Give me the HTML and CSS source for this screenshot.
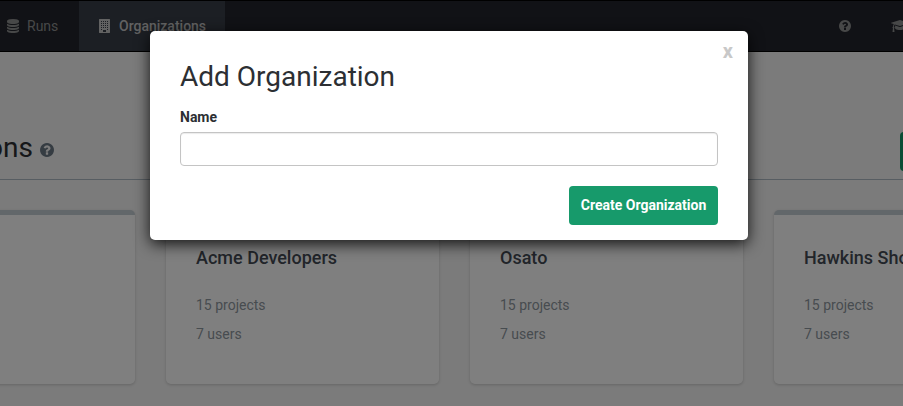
FILE: index.html
```html
<!DOCTYPE html>
<html lang="en">
<head>
<meta charset="utf-8">
<title>Organizations</title>
<link rel="stylesheet" href="styles.css">
</head>
<body>
<svg class="defs" aria-hidden="true">
  <symbol id="question" viewBox="128 128 1536 1536"><path d="M1024 1376v-192q0-14-9-23t-23-9h-192q-14 0-23 9t-9 23v192q0 14 9 23t23 9h192q14 0 23-9t9-23zm256-672q0-88-55.500-163t-138.500-116-170-41q-243 0-371 213-15 24 8 42l132 100q7 6 19 6 16 0 25-12 53-68 86-92 34-24 86-24 48 0 85.500 26t37.500 59q0 38-20 61t-68 45q-63 28-115.500 86.500t-52.500 125.500v36q0 14 9 23t23 9h192q14 0 23-9t9-23q0-19 21.500-49.500t54.500-49.500q32-18 49-28.500t46-35 44.500-48 28-60.500 12.500-81zm384 192q0 209-103 385.500t-279.500 279.500-385.500 103-385.500-103-279.500-279.500-103-385.500 103-385.500 279.500-279.500 385.500-103 385.500 103 279.500 279.500 103 385.500z"/></symbol>
</svg>
<header class="nav">
  <a class="tab tab-runs">
    <svg class="i-db" viewBox="128 0 1536 1792"><path d="M896 768q237 0 443-43t325-127v170q0 69-103 128t-280 93.500-385 34.500-385-34.500-280-93.500-103-128v-170q119 84 325 127t443 43zm0 768q237 0 443-43t325-127v170q0 69-103 128t-280 93.500-385 34.500-385-34.500-280-93.500-103-128v-170q119 84 325 127t443 43zm0-384q237 0 443-43t325-127v170q0 69-103 128t-280 93.500-385 34.500-385-34.500-280-93.500-103-128v-170q119 84 325 127t443 43zm0-1152q208 0 385 34.500t280 93.500 103 128v128q0 69-103 128t-280 93.500-385 34.500-385-34.500-280-93.500-103-128v-128q0-69 103-128t280-93.500 385-34.500z"/></svg>
    <span>Runs</span>
  </a>
  <a class="tab active">
    <svg class="i-building" viewBox="0 0 11 14"><path fill-rule="evenodd" d="M.4 0h10.200q.4 0 .4.400v13.200q0 .4-.4.400H.4q-.4 0-.4-.4V.4Q0 0 .4 0zM2 2h1v1H2zM4 2h1v1H4zM6 2h1v1H6zM8 2h1v1H8zM2 4h1v1H2zM4 4h1v1H4zM6 4h1v1H6zM8 4h1v1H8zM2 6h1v1H2zM4 6h1v1H4zM6 6h1v1H6zM8 6h1v1H8zM2 8h1v1H2zM4 8h1v1H4zM6 8h1v1H6zM8 8h1v1H8zM2 10h1v1H2zM8 10h1v1H8zM4 11h3v2H4z"/></svg>
    <span>Organizations</span>
  </a>
  <div class="tools">
    <svg class="i-help"><use href="#question"/></svg>
    <svg class="i-cap" viewBox="0 0 2304 1792"><path d="M1774 836l18 316q4 69-82 128t-235 93.500-323 34.500-323-34.500-235-93.500-82-128l18-316 574 181q22 7 48 7t48-7zm530-324q0 23-22 31l-1120 352q-4 1-10 1t-10-1l-652-206q-43 34-71 111.500t-34 178.500q63 36 63 109 0 69-58 107l58 433q2 14-8 25-9 11-24 11h-192q-15 0-24-11-10-11-8-25l58-433q-58-38-58-107 0-73 65-111 11-207 98-330l-333-104q-22-8-22-31t22-31l1120-352q4-1 10-1t10 1l1120 352q22 8 22 31z"/></svg>
  </div>
</header>
<main>
  <div class="title-row">
    <h1>Organizations</h1>
    <svg class="i-title"><use href="#question"/></svg>
    <div class="add"></div>
  </div>
  <div class="cards">
    <section class="card"></section>
    <section class="card"><h2>Acme Developers</h2><p>15 projects</p><p>7 users</p></section>
    <section class="card"><h2>Osato</h2><p>15 projects</p><p>7 users</p></section>
    <section class="card"><h2>Hawkins Shoes</h2><p>15 projects</p><p>7 users</p></section>
  </div>
</main>
<div class="overlay">
  <form class="modal">
    <button type="button" class="close">x</button>
    <h3>Add Organization</h3>
    <label for="name">Name</label>
    <input id="name" type="text">
    <button type="button" class="create">Create Organization</button>
  </form>
</div>
</body>
</html>
```

FILE: styles.css
```css
* { box-sizing: border-box; }
html { overflow: hidden; }
body {
  margin: 0;
  height: 406px;
  overflow: hidden;
  background: #f6f6f6;
  font-family: Roboto, sans-serif;
  font-size: 14px;
}
svg { fill: currentColor; flex: none; }
.defs { display: none; }

.nav {
  display: flex;
  height: 52px;
  background: #22252c;
  border-top: 1px solid #000;
  border-bottom: 1px solid #000;
  color: #8f9090;
}
.tab { display: flex; align-items: center; font-weight: 500; }
.tab-runs { width: 79px; padding-left: 7px; gap: 8px; font-weight: 400; }
.active { width: 146px; padding-left: 20px; gap: 9px; background: #383f48; color: #c4c4c4; }
.i-db { width: 12px; height: 14px; }
.i-building { width: 11px; height: 14px; }
.tools { display: flex; align-items: center; margin-left: auto; margin-right: -6px; gap: 40px; }
.i-help { width: 12px; height: 12px; }
.i-cap { width: 18px; height: 14px; }

.title-row {
  display: flex;
  height: 128px;
  padding-top: 67px;
  border-bottom: 1px solid #afbac4;
}
h1 {
  flex: none;
  width: 180px;
  margin: 1px 7px 0 -147px;
  text-align: right;
  font-size: 28px;
  line-height: 56px;
  font-weight: 400;
  color: #2c2f33;
}
.i-title { width: 14px; height: 14px; margin-top: 24px; color: #6b7885; }
.add { width: 150px; height: 39px; margin: 13px -147px 0 auto; border-radius: 4px; background: #179a6b; }
.cards { display: flex; gap: 31px; margin: 30px 0 0 -138px; }
.card {
  flex: none;
  width: 273px;
  height: 174px;
  padding: 31px 30px 0;
  border-top: 5px solid #c5ced4;
  border-radius: 5px;
  background: #fff;
  box-shadow: 0 1px 3px rgba(0, 0, 0, .18);
}
h2 { margin: 0 0 25px; font-size: 18px; line-height: 24px; font-weight: 500; color: #444b55; white-space: nowrap; }
.card p { margin: 0 0 9px; line-height: 20px; color: #8f98a0; }

.overlay {
  position: absolute;
  inset: 0;
  display: flex;
  justify-content: center;
  align-items: flex-start;
  padding: 31px 5px 0 0;
  background: rgba(0, 0, 0, .5);
}
.modal {
  position: relative;
  display: flex;
  flex-direction: column;
  width: 598px;
  height: 209px;
  padding: 29px 30px 0;
  border-radius: 5px;
  background: #fff;
  box-shadow: 0 4px 15px rgba(0, 0, 0, .85);
}
h3 { margin: 0; font-size: 28px; line-height: 34px; font-weight: 400; color: #2c2f33; }
label { margin: 13px 0 5px; line-height: 20px; font-weight: 700; color: #2c2f33; }
input {
  height: 34px;
  border: 1px solid #c4c4c4;
  border-radius: 4px;
  box-shadow: inset 0 1px 1px rgba(0, 0, 0, .08);
  outline: none;
}
button { font-family: inherit; border: 0; padding: 0; }
.create {
  align-self: flex-end;
  width: 149px;
  height: 39px;
  margin-top: 20px;
  padding-bottom: 2px;
  border-radius: 4px;
  background: #179a6b;
  color: #fff;
  font-size: 14px;
  font-weight: 700;
}
.close {
  position: absolute;
  top: 10px;
  right: 15px;
  background: none;
  color: #c8c8c8;
  font-size: 20px;
  line-height: 20px;
  font-weight: 700;
}
```
